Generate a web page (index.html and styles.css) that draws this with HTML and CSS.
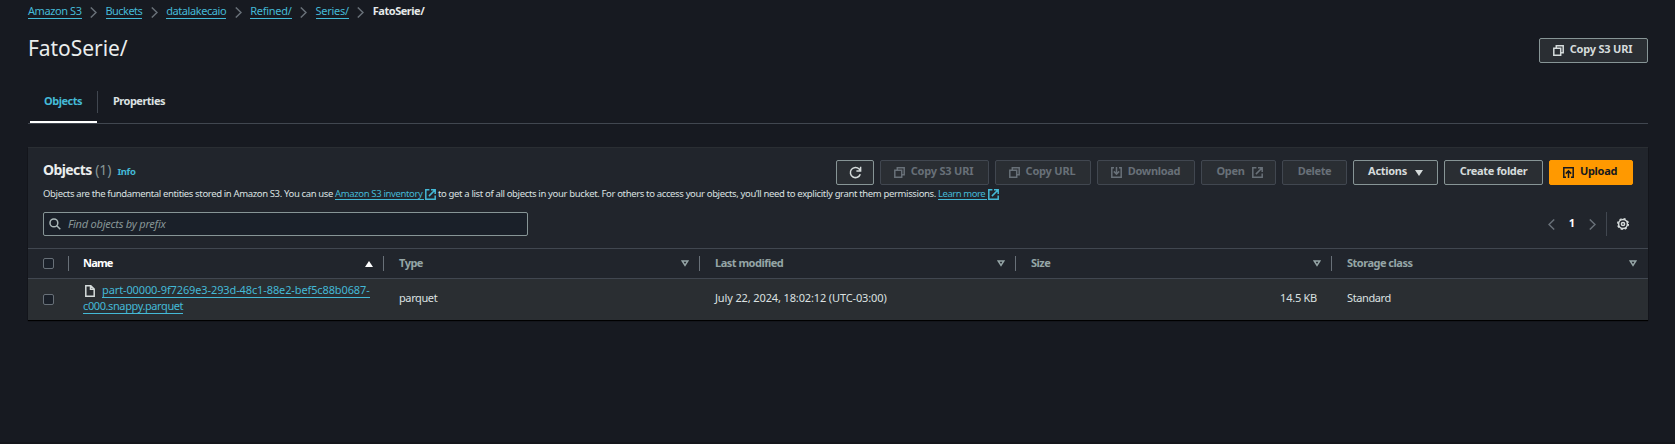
FILE: index.html
```html
<!DOCTYPE html>
<html lang="en">
<head>
<meta charset="utf-8">
<title>FatoSerie/ - S3 bucket</title>
<link rel="stylesheet" href="styles.css">
</head>
<body>
<svg class="sprite" aria-hidden="true">
  <symbol id="chev" viewBox="0 0 7 11"><path d="M.8.5L6 5.5.8 10.5"/></symbol>
  <symbol id="copy" viewBox="0 0 11 11"><path d="M.8 3.3h6.9v6.9H.8zM3.3 3.3V.8h6.9v6.9H7.7"/></symbol>
  <symbol id="refresh" viewBox="0 0 13 13"><path d="M11.3 8.2A5.1 5.1 0 1 1 10.2 3l1.3 1.6M11.6.8v4.1H7.4"/></symbol>
  <symbol id="download" viewBox="0 0 11 11"><path d="M3 .8H.8v9.4h9.4V.8H8M5.5 0v7M2.8 4.4l2.7 2.7 2.7-2.7"/></symbol>
  <symbol id="upload" viewBox="0 0 11 11"><path d="M3 10.2H.8V.8h9.4v9.4H8M5.5 11V4M2.8 6.6l2.7-2.7 2.7 2.7"/></symbol>
  <symbol id="external" viewBox="0 0 11 11"><path d="M4.4.8H.8v9.4h9.4V6.6M6 .8h4.2V5M10.2.8L3.9 7.1"/></symbol>
  <symbol id="search" viewBox="0 0 12 12"><circle cx="4.9" cy="4.9" r="3.9"/><path d="M7.8 7.8l3.5 3.5"/></symbol>
  <symbol id="gear" viewBox="0 0 12 12"><circle cx="6" cy="6" r="4.4"/><circle class="teeth" cx="6" cy="6" r="5.3"/><circle cx="6" cy="6" r="1.6"/></symbol>
  <symbol id="file" viewBox="0 0 10 12"><path d="M.8.8h5L9.2 4v7.2H.8zM5.5.8v3.5h3.7"/></symbol>
  <symbol id="sort" viewBox="0 0 8 7"><path d="M1.2 1h5.6L4 5.3z"/></symbol>
  <symbol id="solid" viewBox="0 0 8 6"><path d="M0 0h8L4 6z"/></symbol>
</svg>
<main class="page">
  <nav class="crumbs">
    <a>Amazon S3</a><svg class="chev"><use href="#chev"/></svg>
    <a class="tight">Buckets</a><svg class="chev"><use href="#chev"/></svg>
    <a>datalakecaio</a><svg class="chev"><use href="#chev"/></svg>
    <a class="loose">Refined/</a><svg class="chev"><use href="#chev"/></svg>
    <a class="loose">Series/</a><svg class="chev"><use href="#chev"/></svg>
    <b>FatoSerie/</b>
  </nav>
  <header class="heading">
    <h1>FatoSerie/</h1>
    <button class="btn w-copy"><svg class="ic"><use href="#copy"/></svg><span>Copy S3 URI</span></button>
  </header>
  <div class="tabs"><div class="tab active"><span>Objects</span></div><div class="tab"><span>Properties</span></div></div>

  <section class="panel">
    <div class="panel-head">
      <h2>Objects <em>(1)</em></h2><a class="info">Info</a>
      <div class="actions">
        <button class="btn w-refresh"><svg class="ic-refresh"><use href="#refresh"/></svg></button>
        <button class="btn off w-copy"><svg class="ic"><use href="#copy"/></svg><span>Copy S3 URI</span></button>
        <button class="btn off w-url"><svg class="ic"><use href="#copy"/></svg><span>Copy URL</span></button>
        <button class="btn off w-down"><svg class="ic"><use href="#download"/></svg><span>Download</span></button>
        <button class="btn off w-open"><span>Open</span><svg class="ic"><use href="#external"/></svg></button>
        <button class="btn off w-del"><span>Delete</span></button>
        <button class="btn w-act"><span>Actions</span><svg class="caret"><use href="#solid"/></svg></button>
        <button class="btn w-create"><span>Create folder</span></button>
        <button class="btn primary w-up"><svg class="ic"><use href="#upload"/></svg><span>Upload</span></button>
      </div>
    </div>
    <p class="desc"><span>Objects are the fundamental entities stored in Amazon S3. You can use</span><a>Amazon S3 inventory</a><svg class="ext"><use href="#external"/></svg><span class="rest">to get a list of all objects in your bucket. For others to access your objects, you’ll need to explicitly grant them permissions.</span><a class="more">Learn more</a><svg class="ext"><use href="#external"/></svg></p>
    <div class="tools">
      <div class="search"><svg><use href="#search"/></svg><span>Find objects by prefix</span></div>
      <div class="pager"><svg class="chev prev"><use href="#chev"/></svg><b>1</b><svg class="chev"><use href="#chev"/></svg><i></i><svg class="gear"><use href="#gear"/></svg></div>
    </div>
    <div class="row head">
      <div class="cell check"><i class="box"></i></div>
      <div class="cell name"><span>Name</span><svg class="tri up"><use href="#solid"/></svg></div>
      <div class="cell"><span>Type</span><svg class="tri"><use href="#sort"/></svg></div>
      <div class="cell"><span>Last modified</span><svg class="tri"><use href="#sort"/></svg></div>
      <div class="cell"><span>Size</span><svg class="tri"><use href="#sort"/></svg></div>
      <div class="cell"><span>Storage class</span><svg class="tri"><use href="#sort"/></svg></div>
    </div>
    <div class="row body">
      <div class="cell check"><i class="box"></i></div>
      <div class="cell file"><div><svg><use href="#file"/></svg><a class="first">part-00000-9f7269e3-293d-48c1-88e2-bef5c88b0687-</a></div><div><a>c000.snappy.parquet</a></div></div>
      <div class="cell"><span>parquet</span></div>
      <div class="cell date"><span>July 22, 2024, 18:02:12 (UTC-03:00)</span></div>
      <div class="cell size"><span>14.5 KB</span></div>
      <div class="cell"><span>Standard</span></div>
    </div>
  </section>
</main>
</body>
</html>
```
FILE: styles.css
```css
* { box-sizing: border-box; }
body { margin: 0; background: #171a21; color: #dce1e1; font: 11px/16px "Noto Sans", "Open Sans", sans-serif; height: 444px; overflow: hidden; border-bottom: 2px solid #14161b; }
.sprite { position: absolute; width: 0; height: 0; }
svg { fill: none; stroke: currentColor; stroke-width: 1.5; flex: none; }
.page { padding: 0 27px 0 28px; white-space: nowrap; }
a { color: #44b9d6; }
.crumbs { display: flex; height: 24px; padding-top: 3px; align-items: flex-start; letter-spacing: -.42px; }
.crumbs a { border-bottom: 1px solid; height: 16px; }
.crumbs .tight { letter-spacing: -.55px; }
.crumbs .loose { letter-spacing: -.28px; }
.crumbs b { color: #e4e8e8; letter-spacing: -.47px; }
.chev { width: 7px; height: 11px; color: #687078; }
.crumbs .chev { margin: 4px 8.3px 0 8.7px; }
.heading { display: flex; height: 67px; justify-content: space-between; align-items: flex-start; padding-top: 14px; }
h1 { margin: -4px 0 0; font-size: 21px; line-height: 28px; font-weight: 400; letter-spacing: -.05px; color: #eaeded; }
.btn { display: flex; align-items: center; justify-content: center; height: 25px; padding: 0; border: 1px solid #879596; border-radius: 2px; background: #2a2e33; color: #d5dbdb; font: 700 11px/16px "Noto Sans", "Open Sans", sans-serif; letter-spacing: -.3px; }
.btn span { padding-bottom: 3px; }
.btn.off { border-color: #414750; color: #687078; }
.btn.primary { background: #f90; border-color: #f90; color: #16191f; }
.ic { width: 11px; height: 11px; margin-right: 6px; }
.tabs { display: flex; height: 33px; border-bottom: 1px solid #414750; font-weight: 700; letter-spacing: -.5px; }
.tab { padding: 2px 16px 0; background: linear-gradient(#414750, #414750) left top / 1px 22px no-repeat; }
.tab.active { margin-left: 2px; width: 67px; padding-left: 14px; color: #44b9d6; border-bottom: 2px solid #fff; background: none; }
.panel { margin-top: 23px; height: 173px; background: #21252c; border-top: 1px solid #2a2e33; box-shadow: 0 1px 1px #000; }
.panel-head { display: flex; height: 38px; padding: 12px 15px 0; }
h2 { margin: -1px 0 0; font-size: 14px; line-height: 22px; letter-spacing: -.6px; color: #eaeded; }
h2 em { font-style: normal; font-weight: 400; color: #879596; letter-spacing: 0; margin-left: .5px; }
.info { font-size: 9.5px; font-weight: 700; letter-spacing: -.4px; margin: 4px 0 0 6px; }
.actions { display: flex; gap: 6px; margin-left: auto; }
.w-copy { width: 109px; letter-spacing: -.2px; padding-right: 2px; }
.w-refresh { width: 38px; }
.w-url { width: 96px; padding-right: 2px; letter-spacing: -.2px; }
.w-down { width: 98px; padding-right: 1px; }
.w-open { width: 75px; }
.w-del { width: 65px; letter-spacing: -.4px; }
.w-act { width: 85px; }
.w-create { width: 99px; letter-spacing: -.35px; }
.w-up { width: 84px; padding-right: 2px; }
.w-open .ic { margin: 0 -2px 0 7px; }
.ic-refresh { width: 13px; height: 13px; }
.caret { width: 8px; height: 6px; margin-left: 8px; fill: currentColor; stroke: none; }
.desc { display: flex; margin: 0; padding: 0 15px; height: 26px; font-size: 9.5px; line-height: 16px; letter-spacing: -.36px; }
.ext { width: 11px; height: 11px; color: #44b9d6; margin: 3px 2px 0 .5px; }
.desc a { border-bottom: 1px solid; height: 14px; margin-left: 2px; padding-right: 2px; }
.rest { letter-spacing: -.35px; }
.desc .more { letter-spacing: -.45px; }
.tools { display: flex; justify-content: space-between; height: 36px; padding: 0 15px; }
.search { display: flex; align-items: center; width: 485px; height: 24px; border: 1px solid #879596; border-radius: 2px; background: #1a2029; padding-left: 5px; color: #879596; font-style: italic; letter-spacing: -.23px; }
.search svg { width: 12px; height: 12px; margin-right: 7px; color: #aab7b8; }
.pager { display: flex; align-items: center; height: 24px; color: #fff; }
.pager b { width: 34px; text-align: center; padding-bottom: 2px; }
.prev { transform: scaleX(-1); }
.pager i { width: 1px; height: 24px; background: #414750; margin: 0 10px; }
.gear { width: 12px; height: 12px; color: #d5dbdb; margin-right: 4px; }
.teeth { stroke-dasharray: 2.1 2.06; }
.row { display: grid; grid-template-columns: 41px 315px repeat(4, 316px); }
.cell { display: flex; align-items: center; padding: 0 11px 0 15px; }
.head { height: 31px; border-top: 1px solid #414750; border-bottom: 1px solid #414750; font-weight: 700; letter-spacing: -.5px; color: #95a5a6; }
.head .cell { justify-content: space-between; }
.head .cell span { padding-bottom: 1px; }
.head .cell:not(:last-child) { background: linear-gradient(#687078, #687078) right center / 1px 15px no-repeat; }
.head .name { color: #fff; letter-spacing: -.8px; padding-left: 14px; }
.tri { width: 8px; height: 7px; }
.up { height: 6px; fill: #fff; stroke: none; transform: scaleY(-1); }
.box { width: 11px; height: 11px; border: 1px solid #687078; border-radius: 2px; background: #1a2029; }
.body { height: 41px; background: #2a2e32; letter-spacing: -.4px; }
.body .cell > span { padding-bottom: 3px; }
.file { flex-direction: column; align-items: flex-start; justify-content: flex-start; padding: 3px 0 0 14px; }
.file div { display: flex; height: 16px; }
.file a { border-bottom: 1px solid; }
.file .first { letter-spacing: -.115px; }
.file svg { width: 10px; height: 12px; margin: 3px 7px 0 2px; color: #d5dbdb; }
.date { letter-spacing: -.13px; }
.size { justify-content: flex-end; padding-right: 15px; letter-spacing: -.25px; }
```
